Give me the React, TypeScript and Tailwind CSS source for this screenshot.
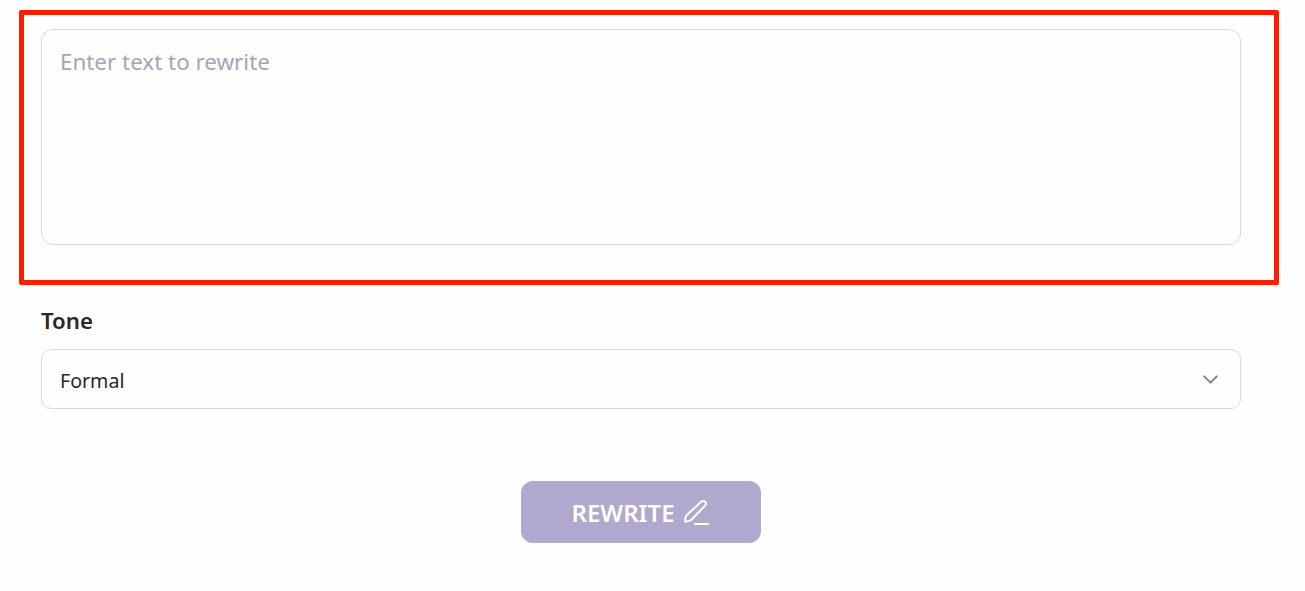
import { ChevronDown } from "lucide-react";

function PenLine() {
  return (
    <svg width="28" height="28" viewBox="0 0 28 28" fill="none" stroke="currentColor" strokeWidth="2" strokeLinecap="round" strokeLinejoin="round">
      <path d="M20.5 2.6a2.4 2.4 0 0 1 3.4 0l.4.4a2.4 2.4 0 0 1 0 3.4L10.4 20.8c-.4.4-.9.7-1.5.8l-4 1a.8.8 0 0 1-1-1l1-4.1c.1-.5.4-1 .8-1.4L20.5 2.6Z" />
      <path d="M14 25h13" />
    </svg>
  );
}

export default function App() {
  return (
    <div className="min-h-[591px] bg-[#fefefe] pt-[10px] font-['Noto_Sans','Open_Sans',sans-serif] text-[#2b2628]">
      <div className="ml-[19px] w-[1260px] h-[275px] border-[5px] border-[#ff1c00] rounded-[2px] pt-[14px] pl-[17px]">
        <textarea
          placeholder="Enter text to rewrite"
          className="block w-[1200px] h-[216px] resize-none rounded-[12px] border border-[#d8d6e8] bg-[#fefefe] px-[18px] py-[15px] text-[22.4px] leading-[33px] outline-none placeholder:text-[#a6a4b8]"
        />
      </div>

      <div className="ml-[41px] w-[1200px]">
        <label className="block mt-[20px] text-[22.2px] font-semibold leading-[32px]">Tone</label>
        <div className="mt-[12px] h-[60px] flex items-center justify-between rounded-[10px] border border-[#d8d6e8] pl-[18px] pr-[17px]">
          <span className="pt-[3px] text-[19.6px] leading-[28px]">Formal</span>
          <ChevronDown className="w-[25px] h-[25px] text-[#858488]" strokeWidth={2} />
        </div>

        <div className="mt-[72px] flex justify-center">
          <button className="w-[240px] h-[62px] pt-[1px] pr-[2px] flex items-center justify-center gap-[6px] rounded-[12px] bg-[#b0a9cd] text-white text-[24px] font-semibold">
            REWRITE
            <PenLine />
          </button>
        </div>
      </div>
    </div>
  );
}
